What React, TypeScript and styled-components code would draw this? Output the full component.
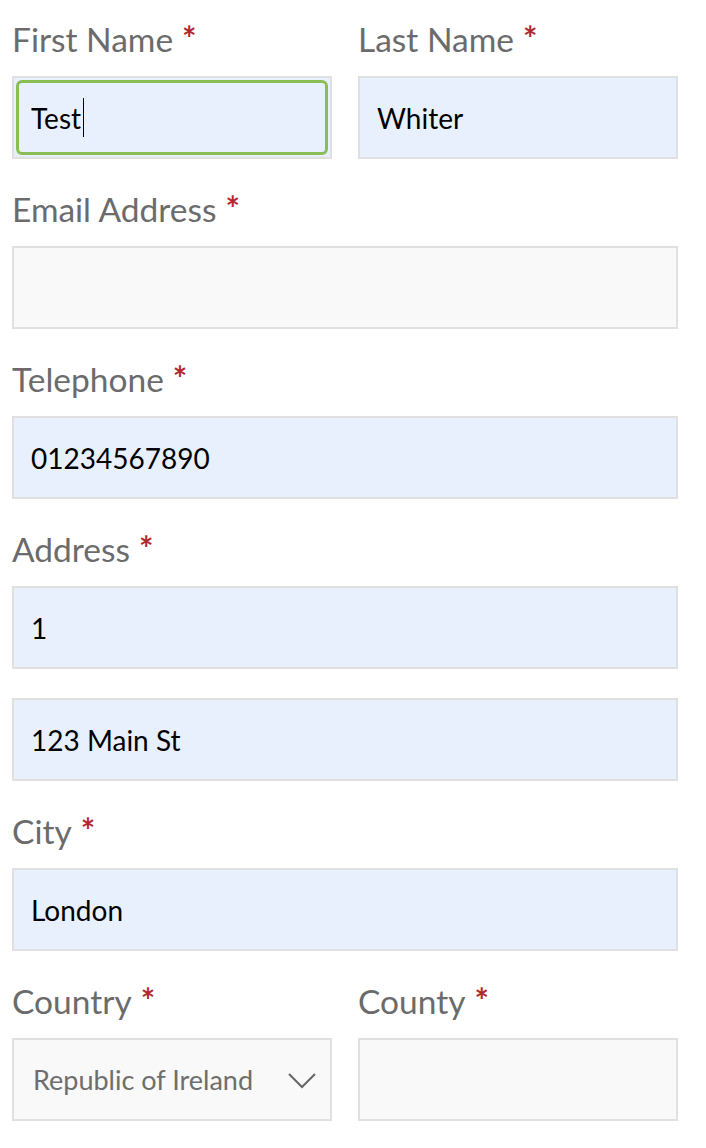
import React from "react";
import styled, { createGlobalStyle } from "styled-components";

const Global = createGlobalStyle`
  html, body { margin: 0; padding: 0; background: #ffffff; }
  body { font-family: Lato, "Open Sans", sans-serif; }
  * { box-sizing: border-box; }
`;

const Form = styled.form`
  width: 666px;
  margin-left: 12px;
  display: flex;
  flex-direction: column;
  gap: 11px;
`;

const Row = styled.div`
  display: grid;
  grid-template-columns: 320px 320px;
  column-gap: 26px;
`;

const Field = styled.div`
  display: flex;
  flex-direction: column;
  gap: 29px;
`;

const Label = styled.label`
  display: block;
  height: 47px;
  margin-bottom: -29px;
  padding-top: 18px;
  font-size: 33.5px;
  line-height: 40px;
  color: #6b6b6b;
  font-weight: 400;
  white-space: nowrap;
`;

const Star = styled.span`
  color: #b3282f;
  margin-left: 9px;
  font-weight: 700;
  font-size: 34px;
  vertical-align: 1px;
`;

const Box = styled.div<{ $filled?: boolean; $flush?: boolean }>`
  height: 83px;
  border: 2px solid #e0e0e0;
  background: ${(p) => (p.$filled ? "#e8f0fe" : "#f9f9f9")};
  display: flex;
  align-items: stretch;
  position: relative;
  margin-top: ${(p) => (p.$flush ? "0" : "29px")};
`;

const Focus = styled.div`
  flex: 1;
  margin: 2px;
  border: 3px solid #8bbd55;
  border-radius: 6px;
  display: flex;
  align-items: center;
  padding-left: 12px;
`;

const Value = styled.span`
  display: flex;
  align-items: center;
  padding-left: 17px;
  font-size: 28px;
  color: #000;
  flex: 1;
`;

const FocusValue = styled.span`
  font-size: 28px;
  color: #000;
  display: flex;
  align-items: center;
`;

const Caret = styled.span`
  display: inline-block;
  width: 1px;
  height: 39px;
  background: #000;
  margin-left: 2px;
`;

const SelectText = styled.span`
  display: flex;
  align-items: center;
  padding-left: 19px;
  font-size: 27px;
  color: #6e6e6e;
  flex: 1;
`;

const Chevron = styled.svg`
  position: absolute;
  right: 14px;
  top: 33px;
`;

const L = ({ text }: { text: string }) => (
  <Label>
    {text}
    <Star>*</Star>
  </Label>
);

export default function App() {
  return (
    <>
      <Global />
      <Form>
        <Row>
          <Field>
            <L text="First Name" />
            <Box $filled>
              <Focus>
                <FocusValue>
                  Test
                  <Caret />
                </FocusValue>
              </Focus>
            </Box>
          </Field>
          <Field>
            <L text="Last Name" />
            <Box $filled>
              <Value>Whiter</Value>
            </Box>
          </Field>
        </Row>
        <Field>
          <L text="Email Address" />
          <Box>
            <Value />
          </Box>
        </Field>
        <Field>
          <L text="Telephone" />
          <Box $filled>
            <Value>01234567890</Value>
          </Box>
        </Field>
        <Field>
          <L text="Address" />
          <Box $filled>
            <Value>1</Value>
          </Box>
          <Box $filled $flush>
            <Value>123 Main St</Value>
          </Box>
        </Field>
        <Field>
          <L text="City" />
          <Box $filled>
            <Value>London</Value>
          </Box>
        </Field>
        <Row>
          <Field>
            <L text="Country" />
            <Box>
              <SelectText>Republic of Ireland</SelectText>
              <Chevron width="28" height="16" viewBox="0 0 28 16">
                <polyline points="1,1 14,14 27,1" fill="none" stroke="#666" strokeWidth="2" />
              </Chevron>
            </Box>
          </Field>
          <Field>
            <L text="County" />
            <Box>
              <Value />
            </Box>
          </Field>
        </Row>
      </Form>
    </>
  );
}
